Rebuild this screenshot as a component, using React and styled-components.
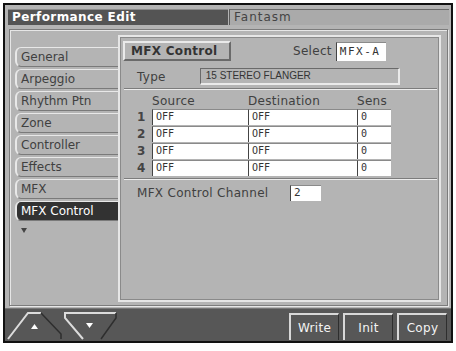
import React from "react";
import styled, { createGlobalStyle } from "styled-components";

const Global = createGlobalStyle`
  html, body { margin: 0; padding: 0; background: #fff; }
  body { font-family: "DejaVu Sans", sans-serif; }
`;

const Screen = styled.div`
  margin: 3px 0 0 3px;
  width: 446px;
  height: 336px;
  border: 2px solid #111;
  background: #b4b4b4;
  display: flex;
  flex-direction: column;
  color: #383838;
`;

const Header = styled.div`
  display: flex;
  height: 16px;
  margin: 4px 2px 0 3px;
  gap: 1px;
`;

const Title = styled.div`
  width: 220px;
  background: #545454;
  border-top: 1px solid #8a8a8a;
  color: #fff;
  font: bold 12px "DejaVu Sans", sans-serif;
  letter-spacing: 0.4px;
  line-height: 15px;
  padding-left: 4px;
  box-sizing: border-box;
`;

const Patch = styled.div`
  flex: 1;
  background: #aaaaaa;
  border-top: 1px solid #6a6a6a;
  border-left: 1px solid #5a5a5a;
  color: #444;
  font: 12px "DejaVu Sans", sans-serif;
  letter-spacing: 1px;
  line-height: 15px;
  padding-left: 4px;
`;

const Frame = styled.div`
  margin: 4px 3px 0 4px;
  height: 277px;
  box-sizing: border-box;
  border: 1px solid #7c7c7c;
  box-shadow: inset 1px 1px 0 #e6e6e6, 1px 1px 0 #e6e6e6;
  display: flex;
  padding: 5px 6px 3px 0;
`;

const TabColumn = styled.div`
  width: 108px;
  padding: 12px 0 0 5px;
  box-sizing: border-box;
  display: flex;
  flex-direction: column;
  gap: 2px;
`;

const Tab = styled.div`
  height: 20px;
  box-sizing: border-box;
  border-top: 1px solid #e8e8e8;
  border-left: 2px solid #e8e8e8;
  border-bottom: 1px solid #7a7a7a;
  border-radius: 6px 0 0 6px;
  background: ${(p) => (p.$active ? "#323232" : "#b4b4b4")};
  color: ${(p) => (p.$active ? "#fff" : "#404040")};
  font: 12px "DejaVu Sans", sans-serif;
  line-height: 18px;
  padding-left: 4px;
`;

const MoreArrow = styled.div`
  margin: 5px 0 0 6px;
  width: 0;
  height: 0;
  border-left: 3px solid transparent;
  border-right: 3px solid transparent;
  border-top: 5px solid #444;
`;

const Panel = styled.div`
  flex: 1;
  box-sizing: border-box;
  border: 2px solid #e6e6e6;
  box-shadow: inset 0 0 0 1px #8a8a8a;
  display: flex;
  flex-direction: column;
`;

const TopRow = styled.div`
  display: flex;
  align-items: center;
  margin: 4px 0 0 3px;
  height: 20px;
`;

const SectionButton = styled.div`
  width: 108px;
  height: 20px;
  box-sizing: border-box;
  border-top: 2px solid #eaeaea;
  border-left: 2px solid #eaeaea;
  border-right: 2px solid #6a6a6a;
  border-bottom: 2px solid #6a6a6a;
  font: bold 12px "DejaVu Sans", sans-serif;
  letter-spacing: 0.3px;
  line-height: 16px;
  padding-left: 6px;
  color: #333;
`;

const Label = styled.span`
  font: 12px "DejaVu Sans", sans-serif;
  letter-spacing: 0.3px;
  color: #404040;
  margin-left: ${(p) => p.$ml || 0}px;
  width: ${(p) => (p.$w ? p.$w + "px" : "auto")};
  flex: none;
`;

const ValueBox = styled.div`
  width: ${(p) => p.$w}px;
  height: ${(p) => p.$h || 16}px;
  box-sizing: border-box;
  margin-left: ${(p) => p.$ml || 0}px;
  background: #fff;
  border-left: 1px solid #444;
  border-top: 1px solid #8a8a8a;
  font: ${(p) => p.$size || 10}px "DejaVu Sans Mono", monospace;
  letter-spacing: ${(p) => p.$ls || 0}px;
  line-height: ${(p) => (p.$h || 16) - 2}px;
  padding-left: 3px;
  color: #333;
  flex: none;
`;

const TypeRow = styled.div`
  display: flex;
  align-items: center;
  margin: 7px 0 0 17px;
  height: 17px;
`;

const TypeField = styled.div`
  width: 200px;
  height: 17px;
  box-sizing: border-box;
  border-top: 1px solid #6a6a6a;
  border-left: 1px solid #6a6a6a;
  border-right: 2px solid #eaeaea;
  border-bottom: 2px solid #eaeaea;
  font: 10px "Liberation Sans", sans-serif;
  line-height: 14px;
  padding-left: 5px;
  color: #333;
  margin-left: 34px;
`;

const Separator = styled.div`
  margin: ${(p) => p.$mt}px 2px 0 4px;
  border-top: 1px solid #7c7c7c;
  border-bottom: 1px solid #ececec;
`;

const Grid = styled.div`
  display: grid;
  grid-template-columns: 15px 96px 109px 34px;
  grid-auto-rows: 16px;
  row-gap: 1px;
  margin-left: 17px;
  align-items: center;
`;

const HeadGrid = styled(Grid)`
  margin-top: 3px;
  margin-bottom: 1px;
  grid-auto-rows: 15px;
`;

const Num = styled.span`
  font: bold 12px "DejaVu Sans", sans-serif;
  color: #444;
  line-height: 16px;
`;

const Cell = styled.div`
  height: 16px;
  box-sizing: border-box;
  background: #fff;
  border-left: 1px solid #444;
  border-top: 1px solid #8a8a8a;
  font: 10px "DejaVu Sans Mono", monospace;
  line-height: 14px;
  padding-left: 3px;
  color: #333;
`;

const ChannelRow = styled.div`
  display: flex;
  align-items: center;
  margin: 5px 0 0 17px;
  height: 16px;
`;

const BottomBar = styled.div`
  margin-top: 2px;
  flex: 1;
  background: #575757;
  border-top: 1px solid #777;
  display: flex;
  align-items: flex-end;
  padding: 0 4px 1px 2px;
`;

const ArrowShape = styled.svg`
  display: block;
  flex: none;
  margin-right: ${(p) => p.$mr || 0}px;
`;

const Spacer = styled.div`
  flex: 1;
`;

const BarButton = styled.div`
  width: 50px;
  height: 27px;
  box-sizing: border-box;
  margin-left: 4px;
  background: #575757;
  border-top: 2px solid #d8d8d8;
  border-left: 2px solid #d8d8d8;
  border-right: 1px solid #2e2e2e;
  color: #f4f4f4;
  font: 12px "DejaVu Sans", sans-serif;
  display: flex;
  align-items: center;
  justify-content: center;
  letter-spacing: 0.3px;
`;

const tabs = [
  "General",
  "Arpeggio",
  "Rhythm Ptn",
  "Zone",
  "Controller",
  "Effects",
  "MFX",
  "MFX Control",
];

export default function App() {
  return (
    <>
      <Global />
      <Screen>
        <Header>
          <Title>Performance Edit</Title>
          <Patch>Fantasm</Patch>
        </Header>
        <Frame>
          <TabColumn>
            {tabs.map((t) => (
              <Tab key={t} $active={t === "MFX Control"}>
                {t}
              </Tab>
            ))}
            <MoreArrow />
          </TabColumn>
          <Panel>
            <TopRow>
              <SectionButton>MFX Control</SectionButton>
              <Label $ml={62}>Select</Label>
              <ValueBox $w={50} $h={19} $size={11} $ls={1.5} $ml={4}>
                MFX-A
              </ValueBox>
            </TopRow>
            <TypeRow>
              <Label>Type</Label>
              <TypeField>15 STEREO FLANGER</TypeField>
            </TypeRow>
            <Separator $mt={3} />
            <HeadGrid>
              <span />
              <Label>Source</Label>
              <Label>Destination</Label>
              <Label>Sens</Label>
            </HeadGrid>
            <Grid>
              {[1, 2, 3, 4].map((n) => (
                <React.Fragment key={n}>
                  <Num>{n}</Num>
                  <Cell>OFF</Cell>
                  <Cell>OFF</Cell>
                  <Cell>0</Cell>
                </React.Fragment>
              ))}
            </Grid>
            <Separator $mt={2} />
            <ChannelRow>
              <Label $w={153}>MFX Control Channel</Label>
              <ValueBox $w={31} $h={16} $size={11}>
                2
              </ValueBox>
            </ChannelRow>
          </Panel>
        </Frame>
        <BottomBar>
          <ArrowShape width="55" height="28" viewBox="0 0 55 28" $mr={2}>
            <polygon points="1,27 21,1 34,1 54,22 54,27" fill="#575757" />
            <polyline points="1,27 21,1 34,1" fill="none" stroke="#dcdcdc" strokeWidth="2" />
            <polyline points="34,1 54,22 54,27" fill="none" stroke="#2e2e2e" strokeWidth="1.5" />
            <polygon points="24,17 27.5,12 31,17" fill="#fff" />
          </ArrowShape>
          <ArrowShape width="54" height="28" viewBox="0 0 54 28">
            <polygon points="1,1 52,1 52,6 37,27 19,27 1,6" fill="#575757" />
            <polyline points="19,27 1,6 1,1 52,1" fill="none" stroke="#dcdcdc" strokeWidth="2" />
            <polyline points="52,1 52,6 37,27" fill="none" stroke="#2e2e2e" strokeWidth="1.5" />
            <polygon points="22,11 29,11 25.5,16" fill="#fff" />
          </ArrowShape>
          <Spacer />
          <BarButton>Write</BarButton>
          <BarButton>Init</BarButton>
          <BarButton>Copy</BarButton>
        </BottomBar>
      </Screen>
    </>
  );
}
